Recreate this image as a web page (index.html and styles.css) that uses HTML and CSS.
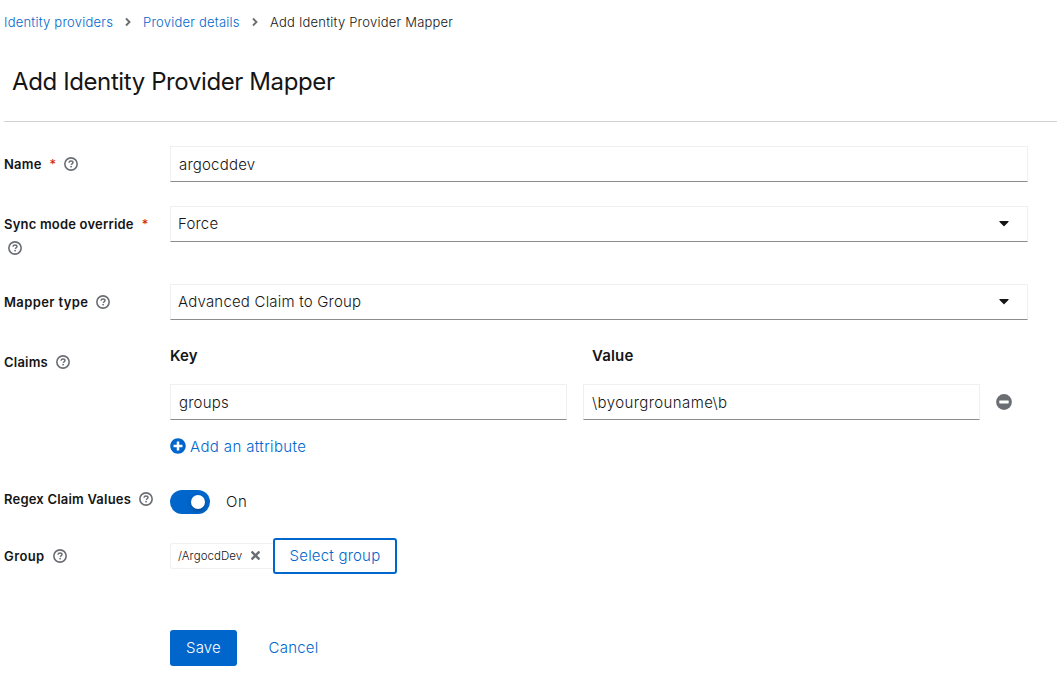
FILE: index.html
```html
<!DOCTYPE html>
<html lang="en">
<head>
<meta charset="utf-8">
<title>Add Identity Provider Mapper</title>
<link rel="stylesheet" href="styles.css">
</head>
<body>
<svg class="defs" aria-hidden="true">
  <symbol id="help" viewBox="0 0 14 14"><circle cx="7" cy="7" r="6.15" fill="none" stroke="currentColor" stroke-width="1.6"/><path d="M5 5.7C5.1 4.5 5.9 3.9 7 3.9c1.2 0 2 .6 2 1.6 0 1.1-1.5 1.4-1.7 2.4" fill="none" stroke="currentColor" stroke-width="1.45"/><rect x="6.3" y="8.9" width="1.6" height="1.5" fill="currentColor"/></symbol>
  <symbol id="chevron" viewBox="0 0 6 10"><path d="M1 1.5 4.5 5 1 8.5" fill="none" stroke="currentColor" stroke-width="1.9"/></symbol>
  <symbol id="caret" viewBox="0 0 320 512"><path fill="currentColor" d="M31.3 192h257.3c17.8 0 26.7 21.5 14.1 34.1L174.1 354.8c-7.8 7.8-20.5 7.8-28.3 0L17.2 226.1C4.6 213.5 13.5 192 31.3 192z"/></symbol>
</svg>
<nav class="breadcrumb">
  <a class="crumb crumb-root">Identity providers</a>
  <svg class="chevron"><use href="#chevron"/></svg>
  <a class="crumb crumb-detail">Provider details</a>
  <svg class="chevron"><use href="#chevron"/></svg>
  <span class="crumb crumb-current">Add Identity Provider Mapper</span>
</nav>
<h1 class="title"><span>Add Identity Provider Mapper</span></h1>
<form class="form">
  <div class="row">
    <div class="label"><span class="l-name">Name</span><span class="required">*</span><svg class="help"><use href="#help"/></svg></div>
    <div class="field"><span class="t-name">argocddev</span></div>
  </div>
  <div class="row row-sync">
    <div class="label"><span class="l-sync">Sync mode override</span><span class="required">*</span><svg class="help help-wrapped"><use href="#help"/></svg></div>
    <div class="field select"><span class="t-force">Force</span><svg class="caret"><use href="#caret"/></svg></div>
  </div>
  <div class="row">
    <div class="label"><span class="l-type">Mapper type</span><svg class="help"><use href="#help"/></svg></div>
    <div class="field select"><span class="t-type">Advanced Claim to Group</span><svg class="caret"><use href="#caret"/></svg></div>
  </div>
  <div class="row row-claims">
    <div class="label"><span class="l-claims">Claims</span><svg class="help"><use href="#help"/></svg></div>
    <div>
      <div class="claims">
        <b class="heading"><span class="t-key">Key</span></b><b class="heading heading-value"><span class="t-value">Value</span></b><i></i>
        <div class="field"><span class="t-groups">groups</span></div>
        <div class="field"><span class="t-regex">\byourgrouname\b</span></div>
        <svg class="minus" viewBox="0 0 16 16"><circle cx="8" cy="8" r="7.9" fill="currentColor"/><rect x="3.3" y="6.4" width="9.4" height="3.1" rx=".4" fill="#fff"/></svg>
      </div>
      <a class="add"><svg class="plus" viewBox="0 0 512 512"><path fill="currentColor" d="M256 8C119 8 8 119 8 256s111 248 248 248 248-111 248-248S393 8 256 8zm144 276c0 6.6-5.4 12-12 12h-92v92c0 6.6-5.4 12-12 12h-56c-6.6 0-12-5.4-12-12v-92h-92c-6.6 0-12-5.4-12-12v-56c0-6.6 5.4-12 12-12h92v-92c0-6.6 5.4-12 12-12h56c6.6 0 12 5.4 12 12v92h92c6.6 0 12 5.4 12 12v56z"/></svg><span class="t-add">Add an attribute</span></a>
    </div>
  </div>
  <div class="row row-regex">
    <div class="label"><span class="l-regex">Regex Claim Values</span><svg class="help"><use href="#help"/></svg></div>
    <div class="toggle-line"><span class="toggle"><i class="knob"></i></span><span class="t-on">On</span></div>
  </div>
  <div class="row row-group">
    <div class="label"><span class="l-group">Group</span><svg class="help"><use href="#help"/></svg></div>
    <div class="group-line">
      <span class="chip"><span class="t-chip">/ArgocdDev</span><svg class="close" viewBox="0 0 352 512"><path fill="currentColor" d="M242.72 256l100.07-100.07c12.28-12.28 12.28-32.19 0-44.48l-22.24-22.24c-12.28-12.28-32.19-12.28-44.48 0L176 189.28 75.93 89.21c-12.28-12.28-32.19-12.28-44.48 0L9.21 111.45c-12.28 12.28-12.28 32.19 0 44.48L109.28 256 9.21 356.07c-12.28 12.28-12.28 32.19 0 44.48l22.24 22.24c12.28 12.28 32.2 12.28 44.48 0L176 322.72l100.07 100.07c12.28 12.28 32.2 12.28 44.48 0l22.24-22.24c12.28-12.28 12.28-32.19 0-44.48L242.72 256z"/></svg></span>
      <span class="button secondary"><span class="t-select">Select group</span></span>
    </div>
  </div>
  <div class="actions"><span class="button primary"><span class="t-save">Save</span></span><span class="button link"><span class="t-cancel">Cancel</span></span></div>
</form>
</body>
</html>
```
FILE: styles.css
```css
* { box-sizing: border-box; }
body { margin: 0; width: 1057px; height: 681px; overflow: hidden; background: #fff; color: #151515; font: 350 15px/24px Inter, sans-serif; letter-spacing: .2px; }
svg { display: block; flex: none; }
.defs { display: none; }
a { color: #06c; }
.breadcrumb { display: flex; align-items: center; height: 44px; padding-left: 4px; font-size: 13px; letter-spacing: .22px; white-space: nowrap; }
.crumb-root { width: 109px; }
.crumb-detail { width: 97px; }
.chevron { width: 6px; height: 10px; margin: 0 12px; color: #6a6e73; }
.title { height: 78px; margin: 0 0 0 4px; padding: 20px 8px 0; border-bottom: 1px solid #d2d2d2; font-size: 24px; line-height: 36px; font-weight: 400; letter-spacing: -.39px; }
.form { display: flex; flex-direction: column; gap: 24px; padding: 24px 29px 0 4px; }
.row { display: grid; grid-template-columns: 166px 858px; align-items: start; }
.row-sync { height: 54px; }
.row-claims { height: 115px; }
.row-regex { height: 31px; }
.label { display: flex; flex-wrap: wrap; align-items: center; width: 156px; padding-top: 6px; font-size: 13px; font-weight: 600; letter-spacing: .2px; white-space: nowrap; }
.l-type { letter-spacing: .38px; }
.l-group { letter-spacing: .4px; }
.required { margin: 0 0 0 8px; color: #c9190b; font-weight: 400; letter-spacing: 0; }
.help { width: 14px; height: 14px; margin-left: 8px; color: #6a6e73; }
.help-wrapped { margin-top: 5px; margin-left: 4px; }
.field { display: flex; align-items: center; height: 36px; padding: 2px 8px 0; border: 1px solid #f0f0f0; border-bottom-color: #8a8d90; }
.select { justify-content: space-between; padding: 0 18px 0 7px; }
.caret { width: 10px; height: 16px; margin-top: -2px; }
.claims { display: grid; grid-template-columns: 397px 397px 16px; column-gap: 16px; grid-template-rows: 40px 36px; align-items: start; }
.t-regex { letter-spacing: .4px; }
.heading { font-weight: 600; font-size: 15px; letter-spacing: .15px; }
.heading-value { padding-left: 9px; }
.minus { width: 16px; height: 16px; margin-top: 10px; color: #6a6e73; }
.add { display: flex; align-items: center; gap: 4px; margin-top: 14px; }
.t-add { padding-top: 1px; margin-bottom: -1px; letter-spacing: .37px; }
.plus { width: 16px; height: 16px; }
.row-regex .label { padding-top: 4px; }
.toggle-line { display: flex; align-items: center; gap: 16px; margin-top: 7px; }
.t-on { letter-spacing: .6px; }
.toggle { width: 40px; height: 24px; padding: 5px; border-radius: 12px; background: #06c; }
.knob { display: block; width: 14px; height: 14px; margin-left: 16px; border-radius: 50%; background: #fff; box-shadow: 0 2px 4px rgba(0,0,0,.3); }
.group-line { display: flex; align-items: center; }
.chip { display: flex; align-items: center; width: 103px; height: 26px; padding-left: 7px; border: 1px solid #f0f0f0; border-right: 0; border-radius: 3px 0 0 3px; font-size: 11.5px; letter-spacing: .07px; }
.close { width: 9px; height: 13px; margin: -2px 0 0 9px; color: #6a6e73; }
.button { display: flex; align-items: center; justify-content: center; height: 36px; border-radius: 3px; }
.secondary { width: 124px; border: 2px solid #06c; color: #06c; }
.actions { display: flex; gap: 16px; padding: 32px 0 0 166px; }
.primary { width: 67px; background: #06c; color: #fff; }
.link { width: 81px; color: #06c; }
```
